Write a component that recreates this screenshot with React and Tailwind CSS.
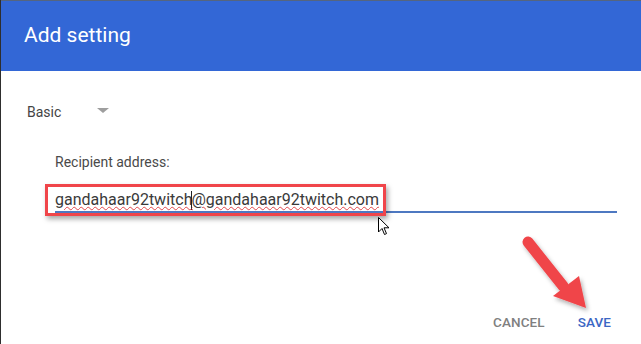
import React from 'react';

export default function App() {
  return (
    <div className="relative w-[641px] h-[344px] overflow-hidden bg-white border-l border-[#2e2e2e] font-['Roboto',sans-serif]">
      {/* Dialog header */}
      <div className="h-[71px] bg-[#3367d6] border-t border-[#55657f] flex items-center pl-[23px]">
        <h1 className="text-white text-[21px] leading-none pb-[1px]">Add setting</h1>
      </div>

      {/* Body */}
      <div className="pl-[26px] pt-[32px]">
        <div className="flex items-center h-[18px] text-[14px] text-[#444]">
          <span>Basic</span>
          <span className="ml-[36px] mb-[3px] w-0 h-0 border-l-[6px] border-r-[6px] border-t-[5px] border-l-transparent border-r-transparent border-t-[#9e9e9e]" />
        </div>

        <div className="pl-[28px] pt-[34px]">
          <div className="text-[14px] text-[#4a4a4a] leading-none">Recipient address:</div>

          <div className="relative mt-[22px] w-[562px] border-b-2 border-[#4d78c1] pb-[1px] text-[16px] leading-[18px]">
            <span className="text-[#3a3a3a] underline decoration-wavy decoration-[#e2474b] decoration-1 underline-offset-[1px]">
              gandahaar92twitch<span className="inline-block w-px h-[19px] bg-[#222] align-middle -mx-px" />@gandahaar92twitch.com
            </span>
            {/* Annotation box */}
            <div className="absolute left-[-10px] top-[-7px] w-[341px] h-[32px] border-[3px] border-[#f0454a] shadow-[2px_3px_5px_rgba(0,0,0,0.35)]" />
          </div>
        </div>
      </div>

      {/* Mouse pointer */}
      <svg className="absolute left-[377px] top-[217px]" width="12" height="19" viewBox="0 0 12 19">
        <path d="M0.5 0.5 L0.5 15 L4 11.5 L6.5 17.5 L8.5 16.6 L6 10.8 L11 10.8 Z" fill="#fff" stroke="#000" strokeWidth="1" strokeLinejoin="round" />
      </svg>

      {/* Annotation arrow */}
      <svg className="absolute left-[510px] top-[230px]" width="100" height="100" viewBox="0 0 100 100">
        <defs>
          <filter id="sh" x="-20%" y="-20%" width="140%" height="140%">
            <feDropShadow dx="2" dy="3" stdDeviation="2" floodColor="#000" floodOpacity="0.3" />
          </filter>
        </defs>
        <g filter="url(#sh)">
          <line x1="17" y1="12" x2="52" y2="56" stroke="#f0454a" strokeWidth="11" strokeLinecap="round" />
          <polygon points="42,66 68,46 75,78" fill="#f0454a" />
        </g>
      </svg>

      {/* Actions */}
      <div className="absolute left-[492px] top-[312px] flex items-center gap-[33px] text-[13.5px] font-medium tracking-[0.1px]">
        <span className="text-[#808080]">CANCEL</span>
        <span className="text-[#3b66c4]">SAVE</span>
      </div>
    </div>
  );
}
